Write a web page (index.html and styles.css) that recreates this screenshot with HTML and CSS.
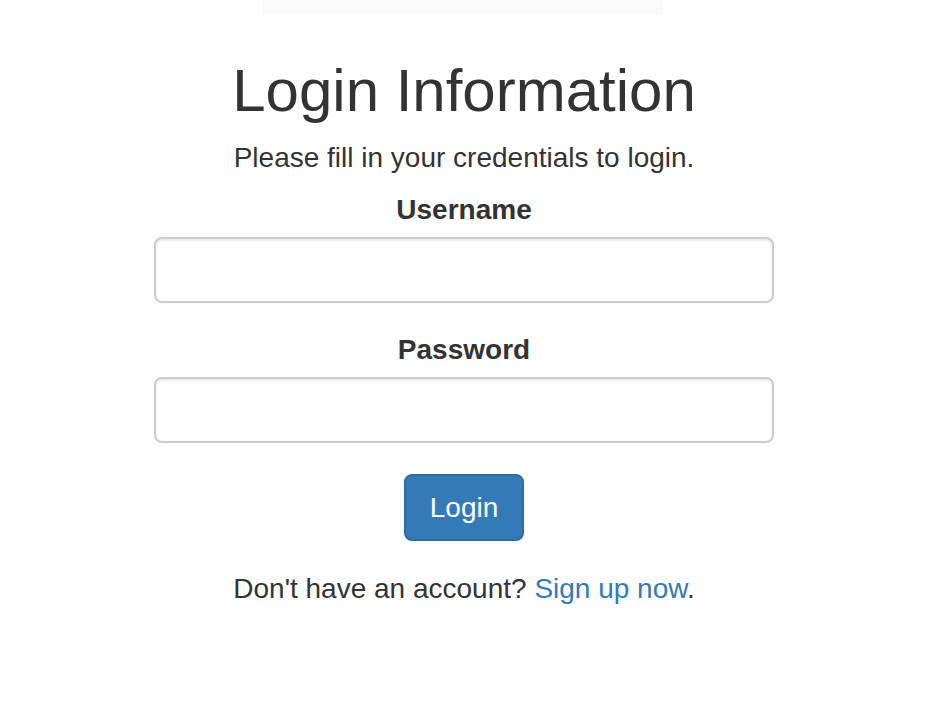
FILE: index.html
```html
<!DOCTYPE html>
<html lang="en">
<head>
<meta charset="utf-8">
<title>Login</title>
<link rel="stylesheet" href="styles.css">
</head>
<body>
<div class="topbar"></div>
<main class="wrapper">
  <h2 class="title">Login Information</h2>
  <p class="intro">Please fill in your credentials to login.</p>
  <form class="form">
    <div class="form-group">
      <label class="label" for="username">Username</label>
      <input class="input" id="username" type="text">
    </div>
    <div class="form-group form-group-last">
      <label class="label" for="password">Password</label>
      <input class="input" id="password" type="password">
    </div>
    <div class="actions">
      <button class="btn" type="button">Login</button>
    </div>
    <p class="signup">Don't have an account? <a class="link" href="#">Sign up now</a>.</p>
  </form>
</main>
</body>
</html>
```

FILE: styles.css
```css
html, body {
  margin: 0;
  padding: 0;
  background: #fff;
}
body {
  font-family: "Liberation Sans", Arial, Helvetica, sans-serif;
  color: #333;
  font-size: 28px;
  line-height: 40px;
}
.topbar {
  width: 400px;
  height: 15px;
  margin: 0 auto 0 263px;
  background: #fafafa;
}
.wrapper {
  width: 620px;
  margin: 0 auto;
  text-align: center;
}
.title {
  margin: 43px 0 14px;
  font-size: 60px;
  line-height: 66px;
  font-weight: 400;
}
.intro {
  margin: 0 0 12px;
}
.form {
  display: flex;
  flex-direction: column;
}
.form-group {
  display: flex;
  flex-direction: column;
  margin-bottom: 27px;
}
.form-group-last {
  margin-bottom: 31px;
}
.label {
  display: block;
  font-weight: 700;
  margin-bottom: 7px;
}
.input {
  box-sizing: border-box;
  width: 100%;
  height: 66px;
  margin: 0;
  border: 2px solid #ccc;
  border-radius: 8px;
  box-shadow: inset 0 2px 2px rgba(0, 0, 0, 0.075);
  background: #fff;
  font: inherit;
  padding: 12px 24px;
}
.actions {
  display: flex;
  justify-content: center;
}
.btn {
  font: inherit;
  font-size: 28px;
  line-height: 39px;
  color: #fff;
  background: #337ab7;
  border: 2px solid #2e6da4;
  border-radius: 8px;
  padding: 12px 24px;
  margin: 0;
  cursor: pointer;
}
.signup {
  margin: 28px 0 0;
}
.link {
  color: #337ab7;
  text-decoration: none;
}
```
